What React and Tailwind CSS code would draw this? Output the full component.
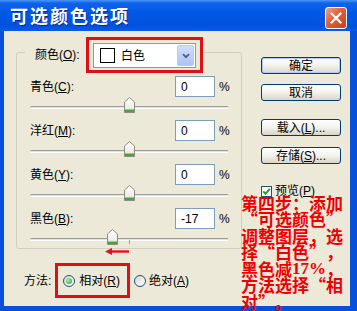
import React from "react";

function Slider({ value }) {
  const center = 99 + value * 0.99;
  return (
    <div className="relative h-[23px] w-[198px] shrink-0">
      <div className="absolute left-0 right-0 top-[9px] h-[3px] rounded-l-full border-t border-b border-t-[#9f9e95] border-b-white bg-[#e4e2d6]" />
      <div className="absolute left-[99px] top-[11px] h-[4px] w-px bg-[#9f9e95]" />
      <svg
        className="absolute top-0"
        style={{ left: center - 5.5 }}
        width="11"
        height="16"
        viewBox="0 0 11 16"
      >
        <defs>
          <linearGradient id="tg" x1="0" y1="0" x2="0" y2="1">
            <stop offset="0" stopColor="#ffffff" />
            <stop offset="1" stopColor="#e6e4da" />
          </linearGradient>
        </defs>
        <path d="M0.5 5 L5.5 0.5 L10.5 5 V15.5 H0.5 Z" fill="url(#tg)" stroke="#8d8c80" />
        <rect x="1" y="12.5" width="9" height="2.5" fill="#3daa3d" />
      </svg>
    </div>
  );
}

function Row({ label, u, value, slider }) {
  return (
    <div className="flex shrink-0 flex-col">
      <div className="flex h-[21px] items-center">
        <span className="w-[145px] text-[12px]">
          {label}(<span className="underline">{u}</span>):
        </span>
        <div className="flex h-[21px] w-[40px] items-center border border-[#7f9db9] bg-white pl-[5px] text-[12px]">
          {value}
        </div>
        <span className="ml-[4px] text-[12px]">%</span>
      </div>
      <Slider value={slider} />
    </div>
  );
}

function Btn({ children, def }) {
  return (
    <div
      className={
        def
          ? "flex h-[17px] w-[80px] items-center justify-center rounded-[3px] border border-[#003c74] bg-linear-to-b from-white via-[#f3f2ec] to-[#d9d5c8] text-[12px] shadow-[inset_0_0_0_1px_#b3c8f2]"
          : "flex h-[17px] w-[80px] items-center justify-center rounded-[3px] border border-[#003c74] bg-linear-to-b from-white via-[#f3f2ec] to-[#d9d5c8] text-[12px]"
      }
    >
      {children}
    </div>
  );
}

function Radio({ checked }) {
  return (
    <div className="flex h-[12px] w-[12px] shrink-0 items-center justify-center rounded-full border border-[#1c5180] bg-linear-to-br from-[#d8d7cf] to-white">
      {checked && (
        <div className="h-[6px] w-[6px] rounded-full bg-[radial-gradient(circle_at_35%_35%,#a6f2a6,#2a9e2a)]" />
      )}
    </div>
  );
}

function Q({ children }) {
  return <span className="w-[17px] shrink-0 text-center">{children}</span>;
}

function Line({ children }) {
  return <div className="flex h-[16.5px] items-center">{children}</div>;
}

export default function App() {
  return (
    <div className="relative flex h-[311px] w-[357px] flex-col overflow-hidden bg-[#0750dd] font-['Liberation_Sans','Noto_Sans_CJK_SC',sans-serif] text-black">
      {/* title bar */}
      <div className="flex h-[31px] shrink-0 items-start bg-[linear-gradient(to_bottom,#4a97f8_0%,#0e62ea_10%,#0057e6_45%,#0052df_85%,#0a5be4_100%)] pl-[10px] pr-[10px]">
        <span className="mt-[5px] font-['Noto_Sans_CJK_SC',sans-serif] text-[18px] font-bold leading-[20px] tracking-[2px] text-white [text-shadow:1px_1px_#0b2a94]">
          可选颜色选项
        </span>
        <div className="ml-auto mt-[7px] flex h-[22px] w-[22px] items-center justify-center rounded-[3px] border border-white bg-[linear-gradient(135deg,#f3a285_0%,#e35d36_45%,#c8401c_100%)]">
          <svg width="12" height="12" viewBox="0 0 12 12">
            <path d="M1.5 1.5 L10.5 10.5 M10.5 1.5 L1.5 10.5" stroke="white" strokeWidth="2.4" strokeLinecap="round" />
          </svg>
        </div>
      </div>

      {/* body */}
      <div className="mb-[5px] ml-[4px] mr-[7px] flex flex-1 bg-[#ece9d8]">
        {/* left column */}
        <div className="flex flex-col pl-[12px] pt-[21px]">
          <div className="flex h-[197px] w-[226px] shrink-0 flex-col rounded-[3px] border border-[#d0d0bf]">
            <div className="-mt-[16px] ml-[8px] flex w-fit shrink-0 items-center bg-[#ece9d8] pl-[10px]">
              <span className="w-[51px] text-[12px]">
                颜色(<span className="underline">O</span>):
              </span>
              <div className="border-[3px] border-[#dd1018] px-[4px] pb-[2px] pt-[3px]">
                <div className="flex h-[25px] w-[103px] items-center border border-[#7f9db9] bg-white p-px">
                  <div className="ml-[5px] h-[15px] w-[15px] border border-black bg-white" />
                  <span className="ml-[6px] text-[12px]">白色</span>
                  <div className="ml-auto flex h-full w-[17px] items-center justify-center rounded-[2px] border border-[#b7cbf6] bg-linear-to-b from-[#d0defd] to-[#adc3f5]">
                    <svg width="8" height="6" viewBox="0 0 8 6">
                      <path d="M1 1.2 L4 4.2 L7 1.2" stroke="#4d6185" strokeWidth="1.8" fill="none" />
                    </svg>
                  </div>
                </div>
              </div>
            </div>
            <div className="mt-[3px] flex shrink-0 flex-col pl-[13px]">
              <Row label="青色" u="C" value="0" slider={0} />
              <Row label="洋红" u="M" value="0" slider={0} />
              <Row label="黄色" u="Y" value="0" slider={0} />
              <Row label="黑色" u="B" value="-17" slider={-17} />
            </div>
          </div>

          <div className="ml-[8px] mt-[14px] flex items-center text-[12px]">
            <span>方法:</span>
            <div className="ml-[4px] flex h-[35px] items-center border-[3px] border-[#dd1018] pl-[5px] pr-[7px]">
              <Radio checked />
              <span className="ml-[4px]">
                相对(<span className="underline">R</span>)
              </span>
            </div>
            <div className="ml-[4px]">
              <Radio />
            </div>
            <span className="ml-[3px]">
              绝对(<span className="underline">A</span>)
            </span>
          </div>
        </div>

        {/* right column */}
        <div className="ml-[19px] flex flex-col pt-[26px]">
          <Btn def>确定</Btn>
          <div className="mt-[10px]">
            <Btn>取消</Btn>
          </div>
          <div className="mt-[18px]">
            <Btn>
              载入(<span className="underline">L</span>)...
            </Btn>
          </div>
          <div className="mt-[11px]">
            <Btn>
              存储(<span className="underline">S</span>)...
            </Btn>
          </div>
          <div className="mt-[18px] flex items-center">
            <div className="flex h-[11px] w-[11px] items-center justify-center border border-[#1c5180] bg-white">
              <svg width="9" height="9" viewBox="0 0 9 9">
                <path d="M1.2 4.4 L3.5 6.8 L7.8 1.8" stroke="#21a121" strokeWidth="2" fill="none" />
              </svg>
            </div>
            <span className="ml-[3px] text-[12px]">
              预览(<span className="underline">P</span>)
            </span>
          </div>
        </div>
      </div>

      {/* annotation text */}
      <div className="absolute left-[241px] top-[194px] flex flex-col whitespace-nowrap font-['Noto_Sans_CJK_SC',sans-serif] text-[17px] font-bold leading-[17px] text-[#f00000]">
        <Line>第四步：添加</Line>
        <Line>
          <Q>“</Q>可选颜色<Q>”</Q>
        </Line>
        <Line>调整图层，选</Line>
        <Line>
          择<Q>“</Q>白色<Q>”</Q>，
        </Line>
        <Line>
          黑色减<span className="font-['Liberation_Serif',serif]">17%</span>，
        </Line>
        <Line>
          方法选择<Q>“</Q>相
        </Line>
        <Line>
          对<Q>”</Q>。
        </Line>
      </div>

      {/* red arrow */}
      <svg className="absolute left-[105px] top-[248px]" width="24" height="7" viewBox="0 0 24 7">
        <polygon points="0,3.5 7,0 7,7" fill="#e8101a" />
        <rect x="6" y="2.3" width="18" height="2.4" fill="#e8101a" />
      </svg>
    </div>
  );
}
